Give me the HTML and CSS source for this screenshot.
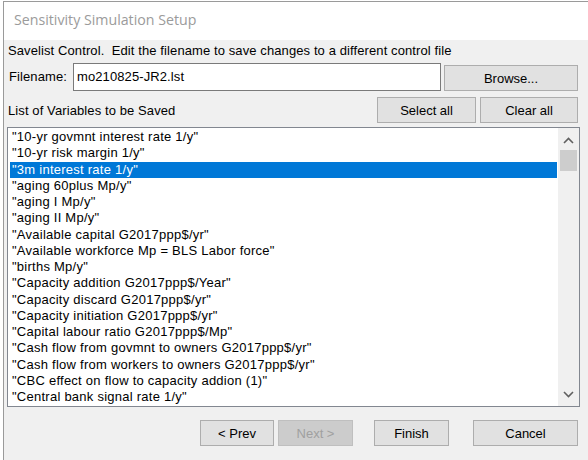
FILE: index.html
```html
<!DOCTYPE html>
<html>
<head>
<meta charset="utf-8">
<link rel="stylesheet" href="styles.css">
</head>
<body>
<div class="window">
  <div class="titlebar"><span class="title">Sensitivity Simulation Setup</span></div>
  <div class="content">
    <div class="desc">Savelist Control.&nbsp; Edit the filename to save changes to a different control file</div>
    <div class="file-row">
      <span class="label">Filename:</span>
      <div class="input">mo210825-JR2.lst</div>
      <div class="btn browse">Browse...</div>
    </div>
    <div class="list-head">
      <span class="label">List of Variables to be Saved</span>
      <div class="btn select">Select all</div>
      <div class="btn clear">Clear all</div>
    </div>
    <div class="listbox">
      <ul class="items">
        <li>"10-yr govmnt interest rate 1/y"</li>
        <li>"10-yr risk margin 1/y"</li>
        <li class="sel">"3m interest rate 1/y"</li>
        <li>"aging 60plus Mp/y"</li>
        <li>"aging I Mp/y"</li>
        <li>"aging II Mp/y"</li>
        <li>"Available capital G2017ppp$/yr"</li>
        <li>"Available workforce Mp = BLS Labor force"</li>
        <li>"births Mp/y"</li>
        <li>"Capacity addition G2017ppp$/Year"</li>
        <li>"Capacity discard G2017ppp$/yr"</li>
        <li>"Capacity initiation G2017ppp$/yr"</li>
        <li>"Capital labour ratio G2017ppp$/Mp"</li>
        <li>"Cash flow from govmnt to owners G2017ppp$/yr"</li>
        <li>"Cash flow from workers to owners G2017ppp$/yr"</li>
        <li>"CBC effect on flow to capacity addion (1)"</li>
        <li>"Central bank signal rate 1/y"</li>
      </ul>
      <div class="scrollbar">
        <svg class="arrow" width="11" height="7" viewBox="0 0 11 7"><path d="M1 6 L5.5 1.5 L10 6" fill="none" stroke="#606060" stroke-width="1.6"/></svg>
        <div class="thumb"></div>
        <div class="track"></div>
        <svg class="arrow" width="11" height="7" viewBox="0 0 11 7"><path d="M1 1 L5.5 5.5 L10 1" fill="none" stroke="#606060" stroke-width="1.6"/></svg>
      </div>
    </div>
    <div class="nav">
      <div class="btn prev">&lt; Prev</div>
      <div class="btn next disabled">Next &gt;</div>
      <div class="btn finish">Finish</div>
      <div class="btn cancel">Cancel</div>
    </div>
  </div>
</div>
</body>
</html>
```
FILE: styles.css
```css
html, body {
  margin: 0;
  padding: 0;
  background: #ffffff;
  overflow: hidden;
  width: 588px;
  height: 460px;
}
.window {
  margin: 1px 0 0 3px;
  width: 584px;
  height: 458px;
  overflow: hidden;
  border-top: 1px solid #9a9a9a;
  border-left: 1px solid #9a9a9a;
  font-family: "Liberation Sans", Arial, sans-serif;
  font-size: 13px;
  color: #000;
}
.titlebar {
  height: 38px;
  background: #fff;
  display: flex;
  align-items: center;
  padding-left: 10px;
}
.title {
  font-family: "Open Sans", "Noto Sans", sans-serif;
  font-size: 14.2px;
  color: #9b9b9b;
  margin-top: -3px;
}
.content {
  background: #f0f0f0;
  height: 417px;
  padding: 3px 0 0 3px;
}
.desc {
  height: 16px;
  line-height: 16px;
  padding-left: 1px;
  letter-spacing: 0.1px;
  white-space: nowrap;
}
.file-row {
  display: flex;
  align-items: center;
  margin-top: 4px;
  height: 28px;
}
.label {
  padding-left: 2px;
  line-height: 16px;
  letter-spacing: 0.1px;
}
.file-row .label {
  width: 64px;
}
.input {
  height: 26px;
  background: #fff;
  border: 1px solid #7a7a7a;
  line-height: 26px;
  padding-left: 3px;
  width: 363px;
  letter-spacing: 0.1px;
}
.btn {
  box-sizing: border-box;
  height: 26px;
  background: #e1e1e1;
  border: 1px solid #adadad;
  display: flex;
  align-items: center;
  justify-content: center;
}
.browse {
  width: 134px;
  margin-left: 3px;
  margin-top: 2px;
}
.list-head {
  display: flex;
  align-items: center;
  margin-top: 6px;
  height: 26px;
  width: 572px;
}
.list-head .label {
  flex: 1;
  padding-left: 1px;
  margin-top: 2px;
}
.select {
  width: 99px;
}
.clear {
  width: 98px;
  margin-left: 4px;
  margin-right: 1px;
}
.listbox {
  margin-top: 4px;
  box-sizing: border-box;
  width: 573px;
  height: 280px;
  border: 1px solid #828790;
  background: #fff;
  display: flex;
}
.items {
  list-style: none;
  margin: 0;
  padding: 1px 1px 0 2px;
  flex: 1;
  overflow: hidden;
}
.items li {
  height: 16.25px;
  line-height: 16px;
  padding-left: 2px;
  white-space: nowrap;
  letter-spacing: 0.25px;
}
.items li.sel {
  background: #0078d7;
  color: #fff;
}
.scrollbar {
  width: 21px;
  background: #f0f0f0;
  display: flex;
  flex-direction: column;
  align-items: center;
}
.arrow {
  margin: 9px 0 8px;
}
.thumb {
  width: 17px;
  height: 21px;
  background: #cdcdcd;
  margin-top: -2px;
}
.track {
  flex: 1;
}
.nav {
  display: flex;
  margin-top: 13px;
  padding-left: 193px;
}
.nav .btn {
  height: 26px;
}
.prev { width: 74px; }
.next { width: 75px; margin-left: 4px; }
.finish { width: 75px; margin-left: 21px; }
.cancel { width: 105px; margin-left: 24px; }
.disabled {
  background: #cccccc;
  border-color: #bfbfbf;
  color: #a0a0a0;
}
```
